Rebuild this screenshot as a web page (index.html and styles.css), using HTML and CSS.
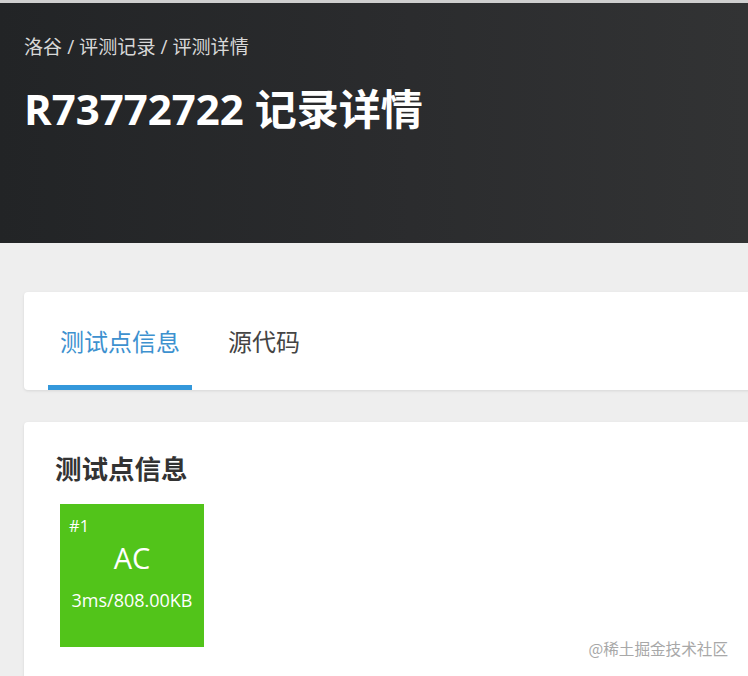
FILE: index.html
```html
<!DOCTYPE html>
<html lang="zh-CN">
<head>
<meta charset="utf-8">
<link rel="stylesheet" href="styles.css">
</head>
<body>
<div class="topline"></div>
<header class="header">
  <div class="crumbs">洛谷 / 评测记录 / 评测详情</div>
  <h1 class="title">R73772722 记录详情</h1>
</header>
<main class="main">
  <section class="card tabs-card">
    <nav class="tabs">
      <div class="tab active">测试点信息</div>
      <div class="tab">源代码</div>
    </nav>
  </section>
  <section class="card info-card">
    <h2 class="info-title">测试点信息</h2>
    <div class="cases">
      <div class="case ac">
        <div class="case-id">#1</div>
        <div class="case-status">AC</div>
        <div class="case-meta">3ms/808.00KB</div>
      </div>
    </div>
  </section>
</main>
<div class="watermark">@稀土掘金技术社区</div>
</body>
</html>
```
FILE: styles.css
```css
html, body {
  margin: 0;
  padding: 0;
}
body {
  width: 748px;
  height: 676px;
  overflow: hidden;
  background: #eeeeee;
  font-family: "Open Sans", "Noto Sans CJK SC", sans-serif;
  position: relative;
}
.topline {
  height: 3px;
  background: #cfcfcf;
}
.header {
  height: 240px;
  box-sizing: border-box;
  padding: 33px 24px 0;
  background: linear-gradient(90deg, #222426 0%, #2b2c2e 55%, #323334 100%);
  color: #fff;
  overflow: hidden;
}
.crumbs {
  font-size: 19.1px;
  line-height: 22px;
  color: #d8d8d8;
}
.title {
  margin: 25px 0 0;
  font-size: 42px;
  line-height: 52px;
  font-weight: 700;
  color: #fff;
  letter-spacing: 0;
  white-space: nowrap;
}
.main {
  padding: 49px 0 0 24px;
  display: flex;
  flex-direction: column;
  gap: 32px;
}
.card {
  background: #fff;
  border-radius: 4px 0 0 4px;
  box-shadow: 0 1px 3px rgba(0,0,0,0.10);
  margin-right: -20px;
}
.tabs-card {
  height: 98px;
  padding-left: 24px;
}
.tabs {
  display: flex;
  height: 100%;
}
.tab {
  height: 98px;
  box-sizing: border-box;
  padding: 0 12px;
  margin-right: 12px;
  line-height: 100px;
  font-size: 24px;
  color: #444;
}
.tab.active {
  color: #3d91cf;
  border-bottom: 5px solid #3498db;
  width: 144px;
  text-align: center;
  padding: 0;
  margin-right: 24px;
}
.info-card {
  height: 300px;
  padding: 30px 0 0 31px;
  box-sizing: border-box;
}
.info-title {
  margin: 0;
  font-size: 26.5px;
  line-height: 34px;
  font-weight: 700;
  color: #333;
}
.cases {
  display: flex;
  margin-top: 18px;
  padding-left: 5px;
}
.case {
  width: 144px;
  height: 143px;
  box-sizing: border-box;
  color: #fff;
  padding: 11px 9px 0;
}
.case.ac {
  background: #52c41a;
}
.case-id {
  font-size: 16.5px;
  line-height: 22px;
}
.case-status {
  text-align: center;
  font-size: 29px;
  line-height: 34px;
  margin-top: 4px;
}
.case-meta {
  text-align: center;
  font-size: 18px;
  line-height: 24px;
  margin-top: 13px;
  margin-left: -8px;
  margin-right: -8px;
}
.watermark {
  position: absolute;
  right: 20px;
  top: 637px;
  font-size: 15.6px;
  line-height: 22px;
  color: #a8a8a8;
  font-family: "Noto Sans CJK SC", sans-serif;
}
```
